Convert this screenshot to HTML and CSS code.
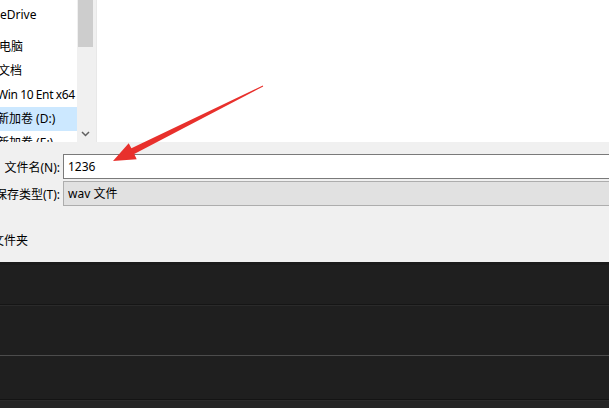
FILE: index.html
```html
<!DOCTYPE html>
<html lang="zh-CN">
<head>
<meta charset="utf-8">
<title>另存为</title>
<link rel="stylesheet" href="styles.css">
</head>
<body>
<div class="page">
  <div class="dialog">
    <div class="browser">
      <div class="tree">
        <div class="row r-onedrive">eDrive</div>
        <div class="row r-pc">电脑</div>
        <div class="row r-docs">文档</div>
        <div class="row r-c">Win 10 Ent x64</div>
        <div class="row r-d selected">新加卷 (D:)</div>
        <div class="row r-e">新加卷 (E:)</div>
      </div>
      <div class="vscroll">
        <div class="thumb"></div>
        <div class="track"></div>
        <div class="down">
          <svg width="9" height="6" viewBox="0 0 9 6"><path d="M1 1 L4.5 4.5 L8 1" fill="none" stroke="#606060" stroke-width="1.5"/></svg>
        </div>
      </div>
      <div class="sep"></div>
      <div class="files"></div>
    </div>
    <div class="form">
      <div class="label"><span>文件名(N):</span></div>
      <div class="input">1236</div>
      <div class="label"><span>保存类型(T):</span></div>
      <div class="combo">wav 文件</div>
    </div>
    <div class="hide-folders"><span>文件夹</span></div>
  </div>
  <div class="editor">
    <div class="track-a"></div>
    <div class="track-b"><div class="wave"></div></div>
    <div class="track-c"></div>
  </div>
  <svg class="annot" width="609" height="408" viewBox="0 0 609 408">
    <polygon points="113,161 136.7,159.2 134.2,154 263.2,86.5 262.8,85.5 131.4,148.3 128.7,143.2" fill="#e8302c"/>
  </svg>
</div>
</body>
</html>
```

FILE: styles.css
```css
html, body {
  margin: 0;
  padding: 0;
}
body {
  width: 609px;
  height: 408px;
  overflow: hidden;
  font-family: "Noto Sans", "Noto Sans CJK SC", sans-serif;
  font-size: 12px;
  color: #000;
  background: #f0f0f0;
}
.page {
  position: relative;
  width: 609px;
  height: 408px;
  overflow: hidden;
}
.dialog {
  height: 262px;
  background: #f0f0f0;
  display: flex;
  flex-direction: column;
}
.browser {
  height: 142px;
  display: flex;
  flex-shrink: 0;
}
.tree {
  width: 77px;
  background: #fff;
  overflow: hidden;
  padding-top: 3px;
  box-sizing: border-box;
}
.row {
  height: 24px;
  line-height: 24px;
  white-space: nowrap;
}
.r-onedrive { margin-bottom: 8px; }
.r-pc { text-indent: -1px; }
.r-docs { text-indent: -2px; }
.r-c {
  text-indent: -3px;
  letter-spacing: -0.4px;
}
.r-d, .r-e { text-indent: -3px; }
.selected {
  background: #cce8ff;
}
.vscroll {
  width: 17px;
  background: #f0f0f0;
  display: flex;
  flex-direction: column;
  align-items: center;
}
.thumb {
  width: 15px;
  height: 47px;
  background: #cdcdcd;
}
.track { flex: 1; }
.down {
  height: 17px;
  display: flex;
  align-items: center;
  justify-content: center;
}
.sep {
  width: 2px;
  background: #f0f0f0;
  border-right: 1px solid #e8e8e8;
}
.files {
  flex: 1;
  background: #fff;
}
.form {
  display: grid;
  grid-template-columns: 60px 560px;
  column-gap: 3px;
  row-gap: 2px;
  padding-top: 12px;
}
.label {
  display: flex;
  justify-content: flex-end;
  align-items: center;
  white-space: nowrap;
  height: 25px;
}
.input, .combo {
  height: 25px;
  box-sizing: border-box;
  line-height: 23px;
  padding-left: 4px;
  white-space: nowrap;
}
.input {
  background: #fff;
  border: 1px solid #7a7a7a;
}
.combo {
  background: #e1e1e1;
  border: 1px solid #adadad;
}
.hide-folders {
  margin-top: 26px;
  height: 18px;
  line-height: 18px;
  white-space: nowrap;
  margin-left: -8px;
}
.editor {
  height: 146px;
  background: #1f1f1f;
  display: flex;
  flex-direction: column;
}
.track-a {
  height: 43px;
  border-top: 3px solid #1b1b1b;
  box-sizing: border-box;
  border-bottom: 1px solid #151515;
}
.track-b {
  height: 95px;
  border-top: 1px solid #2a2a2a;
  box-sizing: border-box;
  border-bottom: 1px solid #141414;
}
.wave {
  margin-top: 49px;
  height: 1px;
  background: #4c4c4c;
}
.track-c {
  flex: 1;
  background: #262626;
  border-top: 1px solid #2c2c2c;
}
.annot {
  position: absolute;
  left: 0;
  top: 0;
  pointer-events: none;
}
```
